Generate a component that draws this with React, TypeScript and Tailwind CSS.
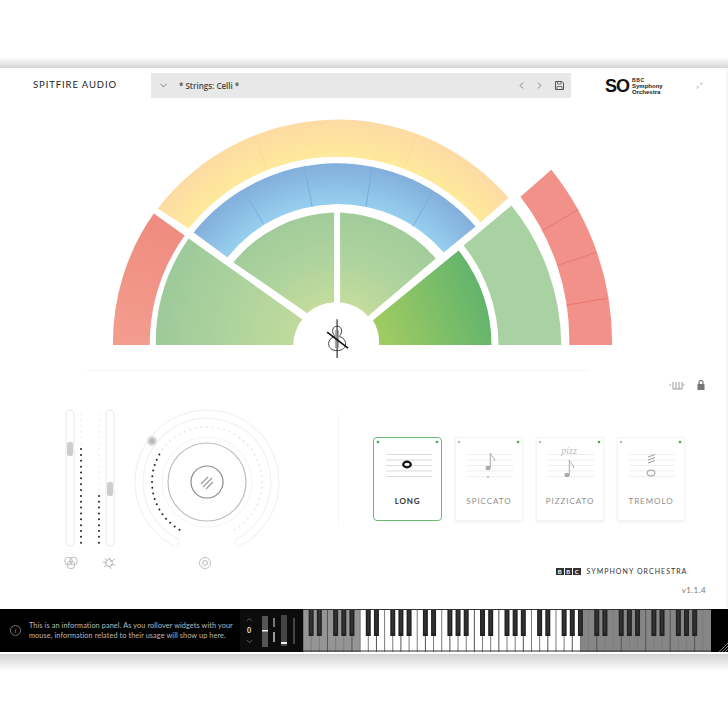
import React from "react";
import { ChevronDown, ChevronLeft, ChevronRight, ChevronUp } from "lucide-react";

const CX = 207;
const CY = 483;
function polar(r: number, deg: number) {
  const a = ((deg - 90) * Math.PI) / 180;
  return [CX + r * Math.cos(a), CY + r * Math.sin(a)];
}

function Stage() {
  return (
    <svg width="728" height="270" viewBox="0 102 728 270" className="block">
      <defs>
        <radialGradient id="yel" gradientUnits="userSpaceOnUse" cx="337" cy="347" r="227">
          <stop offset="0.84" stopColor="#fee99b" />
          <stop offset="1" stopColor="#fddba4" />
        </radialGradient>
        <radialGradient id="blu" gradientUnits="userSpaceOnUse" cx="337" cy="347" r="184">
          <stop offset="0.76" stopColor="#98d1f0" />
          <stop offset="1" stopColor="#82aedb" />
        </radialGradient>
        <radialGradient id="grn" gradientUnits="userSpaceOnUse" cx="337" cy="347" r="134">
          <stop offset="0.33" stopColor="#c4dc9c" />
          <stop offset="0.62" stopColor="#b0d49e" />
          <stop offset="1" stopColor="#a1cc9a" />
        </radialGradient>
        <radialGradient id="grn2" gradientUnits="userSpaceOnUse" cx="337" cy="347" r="182">
          <stop offset="0.25" stopColor="#c0da9c" />
          <stop offset="0.6" stopColor="#aed39d" />
          <stop offset="1" stopColor="#9dca9a" />
        </radialGradient>
        <linearGradient id="dark" gradientUnits="userSpaceOnUse" x1="375" y1="335" x2="480" y2="295">
          <stop offset="0" stopColor="#a3cc62" />
          <stop offset="1" stopColor="#64b56c" />
        </linearGradient>
        <linearGradient id="red" gradientUnits="userSpaceOnUse" x1="165" y1="220" x2="130" y2="346">
          <stop offset="0" stopColor="#ef8b80" />
          <stop offset="1" stopColor="#f39d8f" />
        </linearGradient>
      </defs>
      <path d="M112 346A225 225 0 0 1 153 214L184 236A189 189 0 0 0 149 346Z" fill="url(#red)" />
      <path d="M157 209A227 227 0 0 1 509 198L481 223A190 190 0 0 0 188 229Z" fill="url(#yel)" />
      <path d="M255 137L266 169M417 135L405 168" stroke="#fbdb92" strokeWidth="1" />
      <path d="M193 233A184 184 0 0 1 476 227L444 253A141 141 0 0 0 227 258Z" fill="url(#blu)" />
      <path d="M243 191L263 224M304 166L312 207M372 167L366 207M433 192L413 227" stroke="#72b0dc" strokeWidth="1" />
      <path d="M233 263A134 134 0 0 1 334 213L334 303A44 44 0 0 0 307 314Z" fill="url(#grn)" />
      <path d="M340 213A134 134 0 0 1 436 259L368 317A44 44 0 0 0 340 303Z" fill="url(#grn)" />
      <path d="M155 346A182 182 0 0 1 188 239L302 320A44 44 0 0 0 293 346Z" fill="url(#grn2)" />
      <path d="M459 251A155 155 0 0 1 492 346L379 346A42 42 0 0 0 373 321Z" fill="url(#dark)" />
      <path d="M512 206A225 225 0 0 1 562 346L499 346A162 162 0 0 0 464 246Z" fill="#a9d2a2" />
      <path d="M552 170A276 276 0 0 1 613 346L570 346A235 235 0 0 0 521 197Z" fill="#f2918a" />
      <path d="M579 210L543 231M597 253L558 266M608 299L567 306" stroke="#e9766f" strokeWidth="1" />
      {/* cello */}
      <g fill="none" stroke="#444" strokeWidth="1">
        <path d="M337 327c-3 0-4.500 2-4.500 5 0 3 2 4 2 5.500-4 1-6 4-6 7 0 4 3 7 8.500 7s8.500-3 8.500-7c0-3-2-6-6-7 0-1.500 2-2.500 2-5.500 0-3-1.500-5-4.500-5Z" />
        <path d="M335.500 331v18M338.500 331v18" stroke="#777" strokeWidth="0.7" />
        <path d="M337 320v39" stroke="#333" strokeWidth="1.200" />
        <path d="M327 333L348 349" stroke="#111" strokeWidth="1.600" />
      </g>
      <rect x="85" y="371" width="505" height="1" fill="#f5f5f5" />
    </svg>
  );
}

function Controls() {
  const leftDots = Array.from({ length: 23 }, (_, i) => 415 + i * 5.85);
  const knobDots: number[] = [];
  for (let d = 150; d >= -150; d -= 6) knobDots.push(d);
  const p0 = polar(68, 208);
  const p1 = polar(68, 152);
  const track = `M${p0[0]} ${p0[1]}A68 68 0 1 1 ${p1[0]} ${p1[1]}`;
  return (
    <svg width="340" height="238" viewBox="0 372 340 238" className="block shrink-0">
      {/* sliders */}
      <rect x="66" y="411" width="8" height="136" rx="4" fill="#fff" stroke="#f0f0f0" strokeWidth="1.500" />
      <rect x="106" y="411" width="8" height="136" rx="4" fill="#fff" stroke="#f0f0f0" strokeWidth="1.500" />
      <rect x="67" y="443" width="6" height="14" rx="2" fill="#cdcdcd" />
      <rect x="107" y="483" width="6" height="14" rx="2" fill="#cdcdcd" />
      {leftDots.map((y) => (
        <circle key={y} cx="81" cy={y} r={y >= 449 ? 1 : 0.8} fill={y >= 449 ? "#222" : "#e9e9e9"} />
      ))}
      {leftDots.map((y) => (
        <circle key={y} cx="99" cy={y} r={y >= 496 ? 1 : 0.8} fill={y >= 496 ? "#222" : "#e9e9e9"} />
      ))}
      {/* knob */}
      <path d={track} fill="none" stroke="#f0f0f0" strokeWidth="9" strokeLinecap="round" />
      <path d={track} fill="none" stroke="#fff" strokeWidth="7" strokeLinecap="round" />
      {knobDots.map((d) => {
        const dark = d <= -59 && d >= -150;
        const [x, y] = polar(55, d);
        return <circle key={d} cx={x} cy={y} r={dark ? 1 : 0.9} fill={dark ? "#222" : "#e4e4e4"} />;
      })}
      <circle cx="152" cy="442" r="4.500" fill="#d2d2d2" stroke="#e4e4e4" strokeWidth="1.500" />
      <circle cx="152" cy="442" r="2.500" fill="#b9b9b9" />
      <circle cx={CX} cy={CY} r="45" fill="none" stroke="#f4f4f4" strokeWidth="1" />
      <circle cx={CX} cy={CY} r="39" fill="none" stroke="#bdbdbd" strokeWidth="1.200" />
      <circle cx={CX} cy={CY} r="16" fill="none" stroke="#8c8c8c" strokeWidth="1.200" />
      <path d="M201 485L208 478M203 488L212 479M206 490L213 483" stroke="#9a9a9a" strokeWidth="1.200" />
      {/* bottom icons */}
      <g fill="none" stroke="#b5b5b5" strokeWidth="0.900">
        <circle cx="68.500" cy="562" r="3.800" />
        <circle cx="73.500" cy="562" r="3.800" />
        <circle cx="71" cy="566" r="3.800" />
        <circle cx="109" cy="564" r="3.500" />
        <path d="M109 558L111 562M115 560L110.500 563M115.500 566L111 565.500M111 570L109 566.500M104 568L107.500 565.500M102.500 563L107 563.500M104.500 559L107.500 562" />
        <circle cx="205" cy="564" r="5.500" />
        <circle cx="205" cy="564" r="2.500" />
      </g>
      <rect x="338" y="415" width="1" height="110" fill="#f6f6f6" />
    </svg>
  );
}

function Staff({ color }: { color: string }) {
  return (
    <>
      {[16, 21.500, 27, 32.500, 38].map((y) => (
        <rect key={y} x="12" y={y} width="46" height="1" fill={color} />
      ))}
    </>
  );
}

function Card({ label, active, children }: { label: string; active?: boolean; children: React.ReactNode }) {
  return (
    <div
      className={
        active
          ? "w-[69px] h-[84px] rounded-[4px] border-[1.5px] border-[#6cba71] bg-white flex flex-col items-center shrink-0"
          : "w-[68px] h-[84px] rounded-[2px] border border-[#f4f4f4] shadow-[0_1px_3px_rgba(0,0,0,0.07)] bg-white flex flex-col items-center shrink-0"
      }
    >
      <svg width="68" height="50" viewBox="0 0 68 50" className="block shrink-0">
        <circle cx="4" cy="4" r="1.300" fill={active ? "#3fae55" : "#bdbdbd"} />
        <circle cx="63" cy="4" r="1.300" fill="#3fae55" />
        {children}
      </svg>
      <div
        className={
          active
            ? "mt-[8px] text-[8px] leading-[10px] tracking-[0.800px] font-bold text-[#333]"
            : "mt-[8px] text-[8px] leading-[10px] tracking-[0.950px] text-[#8f8f8f]"
        }
      >
        {label}
      </div>
    </div>
  );
}

function RightColumn() {
  return (
    <div className="flex-1 flex flex-col pt-[6px]">
      <div className="h-[16px] flex items-center justify-end pr-[21px] gap-[11px]">
        <svg width="18" height="10" viewBox="0 0 18 10" className="block">
          <path d="M1 5L3 3.500V6.500ZM17 5L15 3.500V6.500Z" fill="#c4c4c4" />
          <path d="M5 2v7M8 2v7M11 2v7M14 2v7M5 9h9" stroke="#999" strokeWidth="1" fill="none" />
        </svg>
        <svg width="8" height="10" viewBox="0 0 8 10" className="block">
          <rect x="0.500" y="4" width="7" height="6" fill="#777" />
          <path d="M2 4V2.500a2 2 0 0 1 4 0V4" fill="none" stroke="#777" strokeWidth="1.200" />
        </svg>
      </div>
      <div className="mt-[44px] pl-[33px] flex gap-[13px]">
        <Card label="LONG" active>
          <Staff color="#dcdcdc" />
          <ellipse cx="33" cy="26.500" rx="3.800" ry="2.800" fill="none" stroke="#111" strokeWidth="2.200" />
        </Card>
        <Card label="SPICCATO">
          <Staff color="#efefef" />
          <ellipse cx="33" cy="30" rx="2.600" ry="2.200" fill="#ababab" />
          <path d="M35.300 30V15C36 19 40 19 39.500 23" fill="none" stroke="#ababab" strokeWidth="1" />
          <circle cx="33" cy="39" r="0.900" fill="#ababab" />
        </Card>
        <Card label="PIZZICATO">
          <Staff color="#efefef" />
          <text x="33" y="16" textAnchor="middle" fontSize="10" fontStyle="italic" fill="#bdbdbd" fontFamily="'Liberation Serif', serif">
            pizz
          </text>
          <ellipse cx="31" cy="37" rx="2.600" ry="2.200" fill="#ababab" />
          <path d="M33.300 37V22C34 26 38 26 37.500 30" fill="none" stroke="#ababab" strokeWidth="1" />
        </Card>
        <Card label="TREMOLO">
          <Staff color="#efefef" />
          <path d="M31 19L38 16.500M31 22L38 19.500M31 25L38 22.500" stroke="#9a9a9a" strokeWidth="1" />
          <ellipse cx="34" cy="35" rx="3.800" ry="2.800" fill="none" stroke="#adadad" strokeWidth="1.200" />
        </Card>
      </div>
      <div className="mt-[46px] pl-[216px] flex items-center gap-[6px] h-[8px]">
        <div className="flex gap-[1px]">
          {["B", "B", "C"].map((c, i) => (
            <span key={i} className="w-[7.500px] h-[7px] bg-[#333] text-white text-[6px] leading-[7px] font-bold text-center">
              {c}
            </span>
          ))}
        </div>
        <span className="text-[7px] leading-[8px] tracking-[1.050px] text-[#333] whitespace-nowrap">SYMPHONY ORCHESTRA</span>
      </div>
      <div className="mt-[10px] pr-[20px] text-right text-[8px] leading-[10px] tracking-[0.400px] text-[#777]">v1.1.4</div>
    </div>
  );
}

function Keyboard() {
  const W = 408 / 50;
  const whites = Array.from({ length: 50 }, (_, i) => i);
  const blackOffsets = [1, 2, 4, 5, 6];
  const blacks: number[] = [];
  for (let o = 0; o < 7; o++) for (const b of blackOffsets) blacks.push(o * 7 + b);
  return (
    <svg width="408" height="43" viewBox="0 0 408 43" className="block shrink-0">
      <rect x="0" y="0" width="408" height="43" fill="#fff" />
      <rect x="0" y="0" width={7 * W} height="43" fill="#959595" />
      <rect x={34 * W} y="0" width={16 * W} height="43" fill="#868686" />
      {whites.map((i) => (
        <rect key={i} x={i * W - 0.5} y="0" width="1" height="43" fill={i % 3 === 0 ? "#555" : "#7c7c7c"} />
      ))}
      {blacks.map((i) => (
        <g key={i}>
          <rect x={i * W - 2.5} y="0" width="5" height="27" fill="#222" />
          <rect x={i * W - 1} y="0" width="2" height="24" fill="#333" />
        </g>
      ))}
      <rect x="0" y="0" width="408" height="1" fill="#333" />
      <rect x="0" y="41.500" width="408" height="1" fill="#333" />
    </svg>
  );
}

function Footer() {
  return (
    <div className="h-[43px] bg-black flex items-stretch shrink-0">
      <div className="w-[240px] flex items-center pl-[10px] gap-[8px]">
        <div className="w-[11px] h-[11px] rounded-full border border-[#777] flex items-center justify-center text-[6px] italic text-[#aaa] shrink-0">
          i
        </div>
        <div className="text-[7.300px] leading-[9.500px] tracking-[0.100px] text-[#cbcbcb] opacity-90 whitespace-nowrap">
          <div>This is an information panel. As you rollover widgets with your</div>
          <div>mouse, information related to their usage will show up here.</div>
        </div>
      </div>
      <div className="w-[63px] bg-[#0c0c0c] flex items-center">
        <div className="w-[18px] flex flex-col items-center text-[#777]">
          <ChevronUp size={9} />
          <span className="text-[7px] leading-[13px] font-bold text-white opacity-90">0</span>
          <ChevronDown size={9} />
        </div>
        <svg width="45" height="43" viewBox="0 0 45 43" className="block">
          <rect x="4" y="7" width="6" height="31" fill="#555" />
          <rect x="4" y="21" width="6" height="1.500" fill="#eee" />
          <rect x="15" y="9" width="2" height="9" fill="#777" />
          <rect x="15" y="23" width="2" height="10" fill="#999" />
          <rect x="23" y="6" width="6" height="31" fill="#444" />
          <rect x="23" y="33" width="6" height="2" fill="#eee" />
          <rect x="35" y="9" width="2" height="26" fill="#444" />
        </svg>
      </div>
      <Keyboard />
      <div className="flex-1 bg-black flex items-end justify-end">
        <svg width="9" height="9" viewBox="0 0 9 9" className="block">
          <path d="M0 9L9 0M3 9L9 3M6 9L9 6" stroke="#999" strokeWidth="0.800" />
        </svg>
      </div>
    </div>
  );
}

export default function App() {
  return (
    <div className="w-[728px] h-[728px] bg-white overflow-hidden flex flex-col font-['Lato','Open_Sans',sans-serif]">
      <div className="h-[57px] shrink-0" />
      <div className="h-[11px] shrink-0 bg-gradient-to-b from-white to-[#d6d6d6]" />
      <div className="h-[541px] shrink-0 border-r-2 border-[#f7f7f7] flex flex-col">
        <header className="h-[34px] shrink-0 flex items-start pt-[5px]">
          <div className="w-[151px] pl-[33px] h-[25px] flex items-center text-[9.500px] tracking-[0.900px] text-[#222] whitespace-nowrap">
            SPITFIRE AUDIO
          </div>
          <div className="w-[420px] h-[25px] bg-[#e8e8e8] flex items-center pl-[7px] pr-[7px] text-[#555]">
            <ChevronDown size={11} strokeWidth={1.500} />
            <span className="ml-[10px] text-[8px] font-['Open_Sans',sans-serif] font-semibold text-[#444]">* Strings: Celli *</span>
            <div className="ml-auto flex items-center gap-[7px]">
              <ChevronLeft size={11} strokeWidth={1.500} />
              <ChevronRight size={11} strokeWidth={1.500} />
              <svg width="9" height="9" viewBox="0 0 9 9" className="block ml-[3px]">
                <path d="M.5.5h6.500l1.500 1.500v6.500h-8Z" fill="none" stroke="#555" strokeWidth="1" />
                <path d="M2.500 1v2h3.500V1M2 8V5.500h5V8" fill="none" stroke="#555" strokeWidth="0.800" />
              </svg>
            </div>
          </div>
          <div className="ml-[34px] w-[60px] h-[25px] flex items-center shrink-0">
            <span className="text-[18px] leading-[18px] font-black tracking-[-1px] text-[#111] font-['Liberation_Sans',sans-serif]">SO</span>
            <div className="ml-[3px] flex flex-col text-[6px] leading-[6px] font-bold text-[#222] font-['Liberation_Sans',sans-serif]">
              <span className="text-[5px] tracking-[0.600px]">BBC</span>
              <span>Symphony</span>
              <span>Orchestra</span>
            </div>
          </div>
          <div className="ml-[30px] h-[25px] flex items-center">
            <svg width="9" height="9" viewBox="0 0 9 9" className="block">
              <path d="M1 8L3.500 5.500M8 1L5.500 3.500M1.500 5.500h2v2M7.500 3.500h-2v-2" fill="none" stroke="#d4d4d4" strokeWidth="1" />
            </svg>
          </div>
        </header>
        <Stage />
        <div className="flex-1 flex">
          <Controls />
          <RightColumn />
        </div>
      </div>
      <Footer />
      <div className="h-[2px] shrink-0 bg-white" />
      <div className="h-[17px] shrink-0 bg-gradient-to-b from-[#d2d2d2] to-white" />
    </div>
  );
}
